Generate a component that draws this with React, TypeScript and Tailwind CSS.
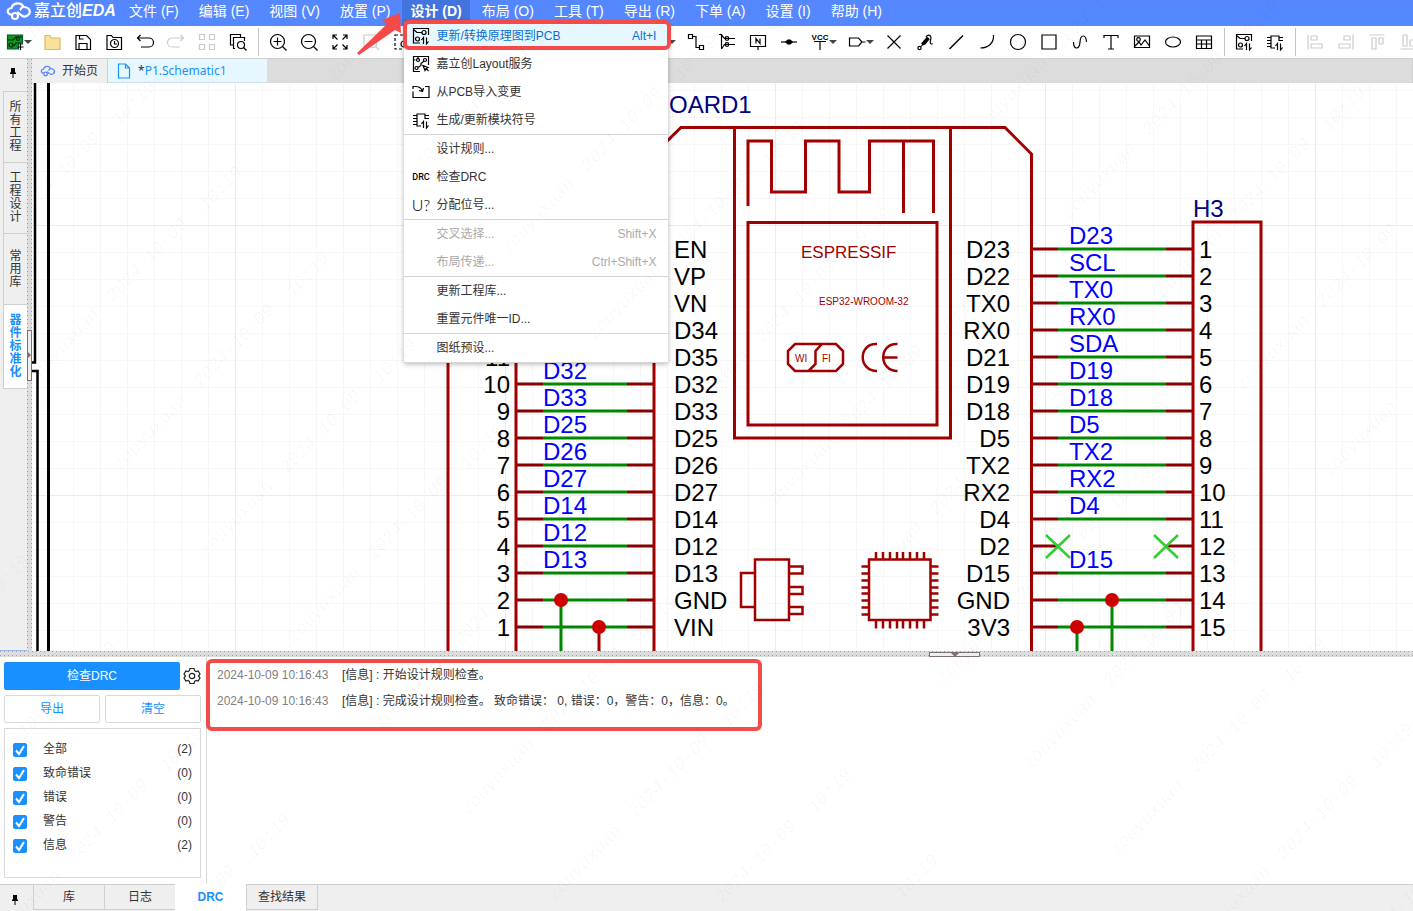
import { FC, ReactNode } from 'react'
import clsx from 'clsx'

const Icon: FC<{ children: ReactNode; className?: string }> = ({ children, className }) => (
  <svg
    viewBox="0 0 18 18"
    aria-hidden="true"
    className={clsx('size-[18px] shrink-0', className)}
    fill="none"
    stroke="currentColor"
    strokeWidth="1.2"
  >
    {children}
  </svg>
)

const Caret: FC = () => (
  <svg viewBox="0 0 8 4" aria-hidden="true" className="-ml-1 h-1 w-2">
    <path d="M0 0h8L4 4z" fill="#444" />
  </svg>
)

const CloudIcon: FC<{ className?: string }> = ({ className }) => (
  <svg
    viewBox="0 0 26 20"
    aria-hidden="true"
    className={className}
    fill="none"
    stroke="currentColor"
    strokeWidth="2.2"
    strokeLinecap="round"
  >
    <path d="M4.500 13.500C.5 12 1 7.500 5.500 7 7 1.500 15 .5 17.500 6c6 0 8.500 5.500 4 8.500-2.500 1.500-5 1-6.500-.5L12 11.500" />
    <path d="M14.500 8.500c.5-1.500 1.500-2.200 3-2.500" />
    <circle cx="9" cy="15" r="3" />
  </svg>
)

const pcbIcon = (
  <>
    <path d="M8 16H1.500V1.500h15V8M1.500 2.500l3.500 3h5" />
    <circle cx="12" cy="5.500" r="2" />
    <circle cx="5.500" cy="12" r="2" />
    <path d="M11.500 17v-6.500L9.500 13M14.500 10.500V17l2-2.500" />
  </>
)

const chipIcon = (
  <>
    <path d="M9 15H5V3h8v5M1 4.500h4M1 7.500h4M1 10.500h4M1 13.500h4M13 4.500h4M13 7.500h4" />
    <path d="M11.500 17v-6.500L9.500 13M14.500 10.500V17l2-2.500" />
  </>
)

const layoutIcon = (
  <>
    <path d="M8 16.500H1.500v-15h15V10M1.500 5h2M6 1.500v3" />
    <circle cx="6" cy="5" r="1.500" />
    <circle cx="13" cy="5" r="1.500" />
    <circle cx="4.500" cy="13" r="1.500" />
    <path d="M12 6 9 8.500v2L6 12.500M11 10.500l5 2-2 1-1 2zM14 13.500l2.500 2.500" />
  </>
)

const importIcon = <path d="M1 6V3.500h3.500M1 8.500v6h16v-11h-4M3.500 3.500c4 0 6 1.500 7 5M7 7.500l3.500 1L11.500 5" />

const drcIcon = (
  <text x="9" y="12" fontSize="9" textAnchor="middle" fill="currentColor" stroke="none" className="font-['Roboto'] font-medium">
    DRC
  </text>
)

const refIcon = (
  <text x="9" y="15" fontSize="16" textAnchor="middle" fill="currentColor" stroke="none" className="font-['Lato'] font-light">
    U?
  </text>
)

type Tool = { label: string; icon: ReactNode; caret?: boolean; off?: boolean }

const toolGroups: Tool[][] = [
  [
    {
      label: '新建',
      caret: true,
      icon: (
        <>
          <path d="M1.500 2h15v9h-4v5h-11z" fill="#0a9a1a" stroke="#053" />
          <path d="M2 7h5l3-3h6M8 13l2-3h5" stroke="#021" />
          <circle cx="5" cy="12" r="2" stroke="#021" />
          <circle cx="12" cy="6" r="1.500" stroke="#021" />
          <path d="M14.500 11v6M11.500 14h6" stroke="#000" />
        </>
      ),
    },
    { label: '打开', icon: <path d="M2 16.500v-14h5l1.500 2.500H17v11.500z" fill="#f9e19b" stroke="#d8bd5e" /> },
    { label: '保存', icon: <path d="M2 16.500v-14h10.500l4 4v10zM5 16v-5.500h8V16M5.500 3v3h4" /> },
    {
      label: '历史',
      icon: (
        <>
          <path d="M2 16.500v-14h4.500L8 4.500h8.500v12z" />
          <circle cx="9.500" cy="10.500" r="4" />
          <path d="M9.500 8v3h2.500" />
        </>
      ),
    },
    { label: '撤销', icon: <path d="M4.500 2 1.500 5l3 3M1.500 5H13a4 4 0 0 1 0 9H5" /> },
    { label: '重做', off: true, icon: <path d="M13.500 2l3 3-3 3M16.500 5H5a4 4 0 0 0 0 9h8" /> },
    { label: '阵列', off: true, icon: <path d="M1.500 1.500h5v5h-5zM11.500 1.500h5v5h-5zM1.500 11.500h5v5h-5zM11.500 11.500h5v5h-5z" /> },
    {
      label: '查找',
      icon: (
        <>
          <path d="M4 12H1.500V1.500h10V4M6 15.500H4.500v-11h11V8" />
          <circle cx="12" cy="12" r="3.500" />
          <path d="m14.500 14.500 3 3" />
        </>
      ),
    },
  ],
  [
    { label: '放大', icon: <><circle cx="8.500" cy="8.500" r="7" /><path d="m13.500 13.500 4 4M4.500 8.500h8M8.500 4.500v8" /></> },
    { label: '缩小', icon: <><circle cx="8.500" cy="8.500" r="7" /><path d="m13.500 13.500 4 4M4.500 8.500h8" /></> },
    {
      label: '适合窗口',
      icon: <path d="M6 2H2v4M2 2l4.500 4.500M12 2h4v4M16 2l-4.500 4.500M6 16H2v-4M2 16l4.500-4.500M12 16h4v-4M16 16l-4.500-4.500" />,
    },
    { label: '适合选中', off: true, icon: <><path d="M7 15H2V2h14v6" /><circle cx="11" cy="11" r="3.500" /><path d="m13.500 13.500 3.500 3.500" /></> },
    { label: '区域选择', icon: <><path d="M2 2h14v14H2z" strokeDasharray="3 2" /><circle cx="11" cy="11" r="3" /></> },
    { label: '左对齐', icon: <path d="M2 2v14M4 5h10M4 11h6" /> },
    { label: '旋转', icon: <path d="M15 9a6 6 0 1 1-3-5" /> },
    { label: '镜像', icon: <path d="M9 2v14M2 14l5-9v9zM16 14l-5-9v9z" /> },
    { label: '翻转', icon: <path d="M2 9h14M4 7l9-5v5zM4 11l9 5v-5z" /> },
  ],
  [
    { label: '网格', icon: <path d="M2 2h14v14H2zM2 9h14M9 2v14" /> },
    { label: '器件', icon: <path d="M4 4h10v10H4z" /> },
    { label: '复用', icon: <path d="M3 5h12v8H3z" /> },
    { label: '尺寸', caret: true, icon: <path d="M2 9h14" /> },
    { label: '导线', icon: <path d="M1.500 1.500h4v4h-4zM12.500 12.500h4v4h-4zM5.500 3.500H9v11h3.500" /> },
    {
      label: '总线',
      icon: (
        <>
          <path d="M1 1.500h2.500v14M3.500 2l3 3.500H17M3.500 16l3-4.500H17" />
          <circle cx="9" cy="5.500" r="1.800" />
          <circle cx="9" cy="11.500" r="1.800" />
        </>
      ),
    },
    { label: '网络标签', icon: <path d="M1.500 2.500h15v11h-15zM9 13.500V17M7 10.500v-5l4 5v-5" /> },
    { label: '节点', icon: <><path d="M1 9h16" /><path d="m5 9 2.500-2.500h3L13 9l-2.500 2.500h-3z" fill="#000" stroke="none" /></> },
    {
      label: '电源',
      caret: true,
      icon: (
        <>
          <text x="9" y="7" fontSize="8" fontWeight="700" textAnchor="middle" fill="currentColor" stroke="none">VCC</text>
          <path d="M3 8.500h12M9 8.500V17" />
        </>
      ),
    },
    { label: '网络端口', caret: true, icon: <path d="M1.500 5h9L14 9l-3.500 4h-9zM14 9h3.500" /> },
    { label: '非连接', icon: <path d="m2.500 2.500 13 13M15.500 2.500l-13 13" /> },
    {
      label: '刷格式',
      icon: (
        <>
          <circle cx="3.500" cy="15" r="1.600" />
          <path d="M5 13.500 7 11" />
          <path d="m6 10.500 5-6 2 1.500-4 5-2 .8z" fill="#000" />
          <path d="M10 4c1.500-2.500 4.500-2.500 5 .5 0 2.500-1.500 4-.5 6 .5.800 1.500.500 2 0" />
        </>
      ),
    },
    { label: '折线', icon: <path d="M2.500 16 16 2.500" strokeWidth="1.500" /> },
    { label: '圆弧', icon: <path d="M15.500 2c.5 8-5 13-13 13" /> },
    { label: '圆形', icon: <circle cx="9" cy="9" r="7.500" /> },
    { label: '矩形', icon: <path d="M2 2h14v14H2z" /> },
    { label: '贝塞尔', icon: <path d="M2.500 9c0 8 6 8 6.500 0s6-8 6.500 0" /> },
    { label: '文本', icon: <path d="M2 5V2.500h14V5M9 2.500v13.500M6 16h6" /> },
    {
      label: '图片',
      icon: <><path d="M1.500 3h15v11.500h-15zM2 13l4-4 2 3 4-5 4.500 6" /><circle cx="5.500" cy="6.500" r="1.800" /></>,
    },
    { label: '椭圆', icon: <ellipse cx="9" cy="9" rx="7.500" ry="5" /> },
    { label: '表格', icon: <path d="M1.500 3h15v12.500h-15zM1.500 7h15M1.500 11h15M6.500 7v8.500M11.500 7v8.500" /> },
  ],
  [
    { label: '转换到PCB', icon: pcbIcon },
    { label: '模块符号', icon: chipIcon },
  ],
  [
    { label: '左对齐图元', off: true, icon: <path d="M2 1.500v15M5 3h6v4H5zM5 11h11v4H5z" /> },
    { label: '右对齐图元', off: true, icon: <path d="M16 1.500v15M7 3h6v4H7zM2 11h11v4H2z" /> },
    { label: '顶对齐图元', off: true, icon: <path d="M1.500 2h15M4 5h4v11H4zM11 5h4v6h-4z" /> },
    { label: '底对齐图元', off: true, icon: <path d="M1.500 16h15M4 2h4v11H4zM11 7h4v6h-4z" /> },
  ],
]

const menus = [
  '文件 (F)', '编辑 (E)', '视图 (V)', '放置 (P)', '设计 (D)', '布局 (O)',
  '工具 (T)', '导出 (R)', '下单 (A)', '设置 (I)', '帮助 (H)',
]

type MenuEntry = { label: string; icon?: ReactNode; keys?: string; off?: boolean; active?: boolean }

const designMenu: MenuEntry[][] = [
  [
    { label: '更新/转换原理图到PCB', icon: pcbIcon, keys: 'Alt+I', active: true },
    { label: '嘉立创Layout服务', icon: layoutIcon },
    { label: '从PCB导入变更', icon: importIcon },
    { label: '生成/更新模块符号', icon: chipIcon },
  ],
  [
    { label: '设计规则...' },
    { label: '检查DRC', icon: drcIcon },
    { label: '分配位号...', icon: refIcon },
  ],
  [
    { label: '交叉选择...', keys: 'Shift+X', off: true },
    { label: '布局传递...', keys: 'Ctrl+Shift+X', off: true },
  ],
  [{ label: '更新工程库...' }, { label: '重置元件唯一ID...' }],
  [{ label: '图纸预设...' }],
]

const DesignMenu: FC = () => (
  <div className="absolute top-[22px] left-0.5 z-20 w-[264px] divide-y divide-[#d5d5d5] bg-white text-xs text-[#333] shadow-[0_1px_5px_rgba(0,0,0,0.3)]">
    {designMenu.map((group, i) => (
      <div key={i}>
        {group.map((item) => (
          <button
            key={item.label}
            type="button"
            disabled={item.off}
            className={clsx(
              'flex h-7 w-full items-center pr-3 pl-2',
              item.active && 'bg-[#e6f7ff] text-[#0a6fd0]',
              item.off && 'text-[#a9a9a9]',
            )}
          >
            <span className="flex w-6 text-black">{item.icon && <Icon>{item.icon}</Icon>}</span>
            {item.label}
            <span className="ml-auto">{item.keys}</span>
          </button>
        ))}
      </div>
    ))}
    <div className="pointer-events-none absolute -top-0.5 -right-[3px] -left-px h-[30px] rounded-md border-4 border-[#f54a48]" />
  </div>
)

const Header: FC = () => (
  <header className="flex h-[26px] shrink-0 bg-[#5588ff] text-white">
    <div className="flex w-[121px] shrink-0 items-center pb-1 pl-1.5">
      <CloudIcon className="h-5 w-[26px]" />
      <span className="ml-0.5 text-base leading-5 font-medium whitespace-nowrap">
        嘉立创<b className="italic">EDA</b>
      </span>
    </div>
    <nav className="flex gap-1 text-sm">
      {menus.map((name) => {
        const open = name === '设计 (D)'
        return (
          <div key={name} className="relative shrink-0">
            <button
              type="button"
              className={clsx('h-full px-2 pb-1 leading-[22px] whitespace-nowrap', open && 'bg-[#4373dc] font-bold')}
            >
              {name}
            </button>
            {open && <DesignMenu />}
          </div>
        )
      })}
    </nav>
  </header>
)

const Toolbar: FC = () => (
  <div className="flex h-[33px] shrink-0 items-center overflow-hidden border-b border-[#cfcfcf] bg-white">
    {toolGroups.map((group, i) => (
      <div key={i} className="flex shrink-0 items-center">
        {i > 0 && <div className="mx-1 h-7 w-px bg-[#c4c4c4]" />}
        {group.map((tool) => (
          <button
            key={tool.label}
            type="button"
            aria-label={tool.label}
            className={clsx(
              'flex h-8 items-center pl-1.5',
              tool.caret ? 'w-[37px] gap-1' : 'w-[31px]',
              tool.off ? 'text-[#ccc]' : 'text-black',
            )}
          >
            <Icon>{tool.icon}</Icon>
            {tool.caret && <Caret />}
          </button>
        ))}
      </div>
    ))}
  </div>
)

const PinIcon: FC = () => (
  <svg viewBox="0 0 8 10" aria-hidden="true" className="h-2.5 w-2">
    <path d="M2 0h4v4l1 1v1H1V5l1-1zM3.500 6h1v4h-1z" fill="#000" />
  </svg>
)

const sideTabs = ['所有工程', '工程设计', '常用库', '器件标准化']

const Sidebar: FC = () => (
  <aside className="flex w-[27px] shrink-0 flex-col border-b border-[#9bb8e8] bg-[#efefef] pl-[3px]">
    <div className="flex h-8 items-center justify-center pr-1 pb-1">
      <PinIcon />
    </div>
    {sideTabs.map((name, i) => (
      <button
        key={name}
        type="button"
        className={clsx(
          'flex items-center justify-center border-t border-l border-[#cfcfcf] text-xs leading-[13px]',
          i === 3 ? 'h-[85px] border-b bg-white font-bold text-[#1890ff]' : 'h-[71px] text-[#333]',
        )}
      >
        <span className="block w-3 break-all">{name}</span>
      </button>
    ))}
  </aside>
)

const RED = '#a00000'
const PIN = '#880000'
const GREEN = '#008800'

const rowY = (i: number) => 249 + i * 27

const leftPins = ['EN', 'VP', 'VN', 'D34', 'D35', 'D32', 'D33', 'D25', 'D26', 'D27', 'D14', 'D12', 'D13', 'GND', 'VIN']
const rightPins = ['D23', 'D22', 'TX0', 'RX0', 'D21', 'D19', 'D18', 'D5', 'TX2', 'RX2', 'D4', 'D2', 'D15', 'GND', '3V3']
const leftNets = ['', '', '', '', '', 'D32', 'D33', 'D25', 'D26', 'D27', 'D14', 'D12', 'D13', '', '']
const rightNets = ['D23', 'SCL', 'TX0', 'RX0', 'SDA', 'D19', 'D18', 'D5', 'TX2', 'RX2', 'D4', '', 'D15', '', '']
const ticks = [0, 7, 14, 21, 27, 34, 41, 48]

const Schematic: FC = () => (
  <svg className="block size-full font-['Liberation_Sans',sans-serif]" role="img" aria-label="P1.Schematic1">
    <defs>
      <pattern id="minor" width="27" height="27" x="19" y="9" patternUnits="userSpaceOnUse">
        <path d="M.5 0v27M0 .5h27" stroke="#f7f7f7" fill="none" />
      </pattern>
      <pattern id="major" width="270" height="270" x="235" y="225" patternUnits="userSpaceOnUse">
        <path d="M.5 0v270M0 .5h270" stroke="#ebebe8" fill="none" />
      </pattern>
    </defs>
    <g transform="translate(-32 -83)">
      <rect width="4000" height="3000" fill="url(#minor)" />
      <rect width="4000" height="3000" fill="url(#major)" />

      {/* sheet frame */}
      <g fill="none" stroke="#000" strokeWidth="3">
        <path d="M35 80v282.500h-5M30 371h7.500v2000" strokeWidth="2.500" />
        <path d="M48.500 80v2400" />
      </g>

      {/* wires */}
      <g fill="none" strokeWidth="3">
        {leftPins.map((_, i) => (
          <g key={i}>
            <path d={`M515 ${rowY(i)}h28M627 ${rowY(i)}h27`} stroke={PIN} />
            <path d={`M543 ${rowY(i)}h84`} stroke={GREEN} />
            <path d={`M1031 ${rowY(i)}h27M1166 ${rowY(i)}h27`} stroke={PIN} />
            {i !== 11 && <path d={`M1058 ${rowY(i)}h108`} stroke={GREEN} />}
          </g>
        ))}
        <path d="M561 600v2000M1112 600v2000M1077 627v2000" stroke={GREEN} />
        <path d="M599 627v2000" stroke={RED} />
        <path d="m1046 535 24 23M1070 535l-24 23M1154 535l24 23M1178 535l-24 23" stroke="#33cc33" strokeWidth="2.500" />
      </g>
      <g fill="#cc0000">
        <circle cx="561" cy="600" r="7" />
        <circle cx="599" cy="627" r="7" />
        <circle cx="1112" cy="600" r="7" />
        <circle cx="1077" cy="627" r="7" />
      </g>

      {/* symbol outlines */}
      <g fill="none" stroke={RED} strokeWidth="3">
        <path d="M448 222v2000M448 222h68v2000M1193 2000V222h68v2000" />
        <path d="M654 2000V154l27-26.500h324l26.500 26.500v2000" />
        <path d="M734.500 127.500V438h216V127.500" />
        <path d="M748 206v-65h23.500v51h34v-51H839v51h30.500v-51h64v72M903.500 141v72" />
        <path d="M748 222.500h189V425H748z" />
        <path d="M795 344h41l7 7v13l-7 7h-41l-7-7v-13zM822 344l-6.500 7v13l-7 7" strokeWidth="2.500" />
        <path d="M877 344c-19-1-19 27 0 27M897.500 344c-19-1-19 27 0 27M883 357.500h14.500" strokeWidth="2.500" />
        <path d="M755 559.500h34V620h-34zM755 573h-14v34h14" strokeWidth="2.500" />
        <path d="M789 566.500h13.500v7H789M789 587h13.500v7H789M789 607h13.500v7H789" strokeWidth="2.500" />
        <path d="M869 559.500h61.500V620H869z" strokeWidth="2.500" />
        {ticks.map((t) => (
          <path
            key={t}
            d={`M${876 + t} 552v7.500M${876 + t} 620v8.500M861.500 ${566.5 + t}h7.500M930.500 ${566.5 + t}h8`}
            strokeWidth="2.500"
          />
        ))}
      </g>
      <g fill={RED}>
        <text x="801" y="258" fontSize="17">ESPRESSIF</text>
        <text x="819" y="305" fontSize="10">ESP32-WROOM-32</text>
        <text x="795" y="362" fontSize="10">WI</text>
        <text x="822" y="362" fontSize="10">FI</text>
      </g>

      <g fontSize="24">
        <g fill="#000080">
          <text x="653" y="113">BOARD1</text>
          <text x="1193" y="217">H3</text>
        </g>
        {leftPins.map((name, i) => (
          <g key={name}>
            {i > 3 && <text x="510" y={rowY(i) + 9} textAnchor="end">{15 - i}</text>}
            <text x="674" y={rowY(i) + 9}>{name}</text>
            <text x="1010" y={rowY(i) + 9} textAnchor="end">{rightPins[i]}</text>
            <text x="1199" y={rowY(i) + 9}>{i + 1}</text>
            <text x="543" y={rowY(i) - 5} fill="#0000ff">{leftNets[i]}</text>
            <text x="1069" y={rowY(i) - 5} fill="#0000ff">{rightNets[i]}</text>
          </g>
        ))}
      </g>
    </g>
  </svg>
)

const Workspace: FC = () => (
  <div className="flex min-w-0 flex-1 flex-col">
    <div className="flex h-6 shrink-0 border-r border-[#cfcfcf] bg-[#dcdcdc] font-['Noto_Sans','Noto_Sans_CJK_SC',sans-serif] text-xs text-[#333]">
      <button type="button" className="flex w-[76px] items-center border-r border-[#cfcfcf] bg-[#efefef] pl-2">
        <CloudIcon className="h-3 w-4 text-[#5588ff]" />
        <span className="ml-1.5">开始页</span>
      </button>
      <button type="button" className="flex w-40 items-center border-r border-b border-[#cfe0ea] bg-[#e6f7ff] pl-2 text-[#1890ff]">
        <svg viewBox="0 0 16 16" aria-hidden="true" className="size-4" fill="none" stroke="currentColor" strokeWidth="1.200">
          <path d="M2.500 1h7l4 4v10h-11zM9.500 1v4h4" />
        </svg>
        <span className="ml-1.5"><span className="text-[#333]">*</span>P1.Schematic1</span>
      </button>
    </div>
    <div className="min-h-0 flex-1 overflow-hidden bg-white">
      <Schematic />
    </div>
  </div>
)

const filters = [
  { id: 'all', label: '全部', count: 2 },
  { id: 'fatal', label: '致命错误', count: 0 },
  { id: 'error', label: '错误', count: 0 },
  { id: 'warning', label: '警告', count: 0 },
  { id: 'info', label: '信息', count: 2 },
]

const logs = [
  { time: '2024-10-09 10:16:43', text: '[信息] : 开始设计规则检查。' },
  { time: '2024-10-09 10:16:43', text: '[信息] : 完成设计规则检查。 致命错误： 0, 错误：0，警告：0，信息：0。' },
]

const DrcPanel: FC = () => (
  <section className="flex h-[227px] shrink-0 bg-white text-xs text-[#333]">
    <div className="flex w-[207px] shrink-0 flex-col border-r border-[#d9d9d9] pt-[5px] pr-[5px] pb-1.5 pl-1">
      <div className="flex items-center justify-between">
        <button type="button" className="h-7 w-44 rounded-xs bg-[#1890ff] text-white">检查DRC</button>
        <button type="button" aria-label="设置">
          <svg viewBox="0 0 18 18" className="size-[18px]" fill="none" stroke="#222" strokeWidth="1.200">
            <path d="M7 1.500h4l.6 2.200 1.400.8 2.200-.6 1.800 3.200L15.400 9l1.600 1.900-1.800 3.200-2.200-.6-1.400.8-.6 2.200H7l-.6-2.200-1.400-.8-2.200.6L1 10.900 2.600 9 1 7.100l1.800-3.200 2.200.6 1.400-.8z" />
            <circle cx="9" cy="9" r="2.700" />
          </svg>
        </button>
      </div>
      <div className="mt-[5px] flex gap-[5px] text-[#1890ff]">
        <button type="button" className="h-7 flex-1 rounded-xs border border-[#d9d9d9]">导出</button>
        <button type="button" className="h-7 flex-1 rounded-xs border border-[#d9d9d9]">清空</button>
      </div>
      <div className="mt-[5px] flex-1 border border-[#d9d9d9] px-2 pt-2">
        {filters.map((f) => (
          <div key={f.id} className="flex h-6 items-center">
            <span className="relative mt-0.5 size-3.5">
              <input
                id={f.id}
                type="checkbox"
                defaultChecked
                className="peer block size-3.5 appearance-none rounded-xs border border-[#1890ff] checked:bg-[#1890ff]"
              />
              <svg
                viewBox="0 0 14 14"
                aria-hidden="true"
                className="pointer-events-none absolute inset-0 hidden peer-checked:block"
                fill="none"
                stroke="#fff"
                strokeWidth="2"
              >
                <path d="M3 7.500 6 11l5-8" />
              </svg>
            </span>
            <label htmlFor={f.id} className="ml-4 flex-1">{f.label}</label>
            <span>({f.count})</span>
          </div>
        ))}
      </div>
    </div>
    <div className="relative min-w-0 flex-1 pt-[5px] pl-2.5">
      {logs.map((log) => (
        <p key={log.text} className="flex h-[26px] items-center">
          <span className="w-[125px] text-[#808080]">{log.time}</span>
          <span className="whitespace-nowrap">{log.text}</span>
        </p>
      ))}
      <div className="pointer-events-none absolute top-0.5 -left-px h-[72px] w-[556px] rounded-md border-4 border-[#f54a48]" />
    </div>
  </section>
)

const bottomTabs = ['库', '日志', 'DRC', '查找结果']

const BottomTabs: FC = () => (
  <footer className="flex h-[27px] shrink-0 items-start bg-[#efefef] text-xs text-[#333]">
    <div className="flex h-full w-[33px] items-center justify-center border-t border-[#cfcfcf] pt-1 pr-1">
      <PinIcon />
    </div>
    {bottomTabs.map((name) => (
      <button
        key={name}
        type="button"
        className={clsx(
          'w-[71px] border-[#cfcfcf]',
          name === 'DRC' ? 'h-full bg-white pb-0.5 font-bold text-[#1890ff]' : 'h-[26px] border-t border-b border-l',
        )}
      >
        {name}
      </button>
    ))}
    <div className="h-[26px] flex-1 border-t border-l border-[#cfcfcf]" />
  </footer>
)

// centre of the date in every stamp, four diagonal chains across the window
const stamps = [[-66, 649], [-27, 88], [448, -43], [1096, 8]].flatMap(([x, y]) =>
  Array.from({ length: 12 }, (_, i) => [
    { text: 'zouyuxuan', x: x + i * 87 - 84, y: y + i * 86 + 87 },
    { text: '2024-10-09', x: x + i * 87, y: y + i * 86 },
    { text: '10:19', x: x + i * 87 + 74, y: y + i * 86 - 71 },
  ]).flat(),
).filter((s) => s.x > -10 && s.x < 1420 && s.y > -10 && s.y < 920)

const Watermark: FC = () => (
  <svg
    aria-hidden="true"
    className="pointer-events-none absolute inset-0 z-30 size-full font-['Liberation_Mono',monospace] italic"
    fill="#000"
    fillOpacity="0.035"
  >
    {stamps.map((s) => (
      <text key={`${s.x},${s.y}`} transform={`translate(${s.x} ${s.y}) rotate(-46)`} y="5" fontSize="18" textAnchor="middle">
        {s.text}
      </text>
    ))}
  </svg>
)

export default function App() {
  return (
    <div className="relative flex h-screen flex-col overflow-hidden bg-white font-['Liberation_Sans','Noto_Sans_CJK_SC',sans-serif]">
      <Header />
      <Toolbar />
      <div className="flex min-h-0 flex-1">
        <Sidebar />
        <div className="flex w-[5px] shrink-0 items-center bg-[#dcdcdc] bg-[conic-gradient(at_1px_1px,transparent_75%,#a0a0a0_0)] bg-size-[4px_4px]">
          <div className="relative z-10 flex h-[51px] w-[5px] shrink-0 items-center border border-[#7c7272] bg-[#efefef]">
            <svg viewBox="0 0 4 8" aria-hidden="true" className="h-2 w-1"><path d="M0 0v8l4-4z" fill="#7c7272" /></svg>
          </div>
        </div>
        <Workspace />
      </div>
      <div className="flex h-1.5 shrink-0 justify-center bg-[#dcdcdc] bg-[conic-gradient(at_1px_1px,transparent_75%,#a0a0a0_0)] bg-size-[4px_4px] pl-[496px]">
        <div className="mt-px flex h-[5px] w-[51px] justify-center border border-[#7c7272] bg-[#efefef]">
          <svg viewBox="0 0 8 4" aria-hidden="true" className="h-1 w-2"><path d="M0 0h8L4 4z" fill="#7c7272" /></svg>
        </div>
      </div>
      <DrcPanel />
      <BottomTabs />

      <svg viewBox="0 0 48 46" aria-hidden="true" className="pointer-events-none absolute top-[11px] left-[356px] z-20 h-[46px] w-12">
        <path d="M1 42 31 13l-5-4 18-7 1 20-6-3L3 44z" fill="#f54a48" />
      </svg>
      <Watermark />
    </div>
  )
}
